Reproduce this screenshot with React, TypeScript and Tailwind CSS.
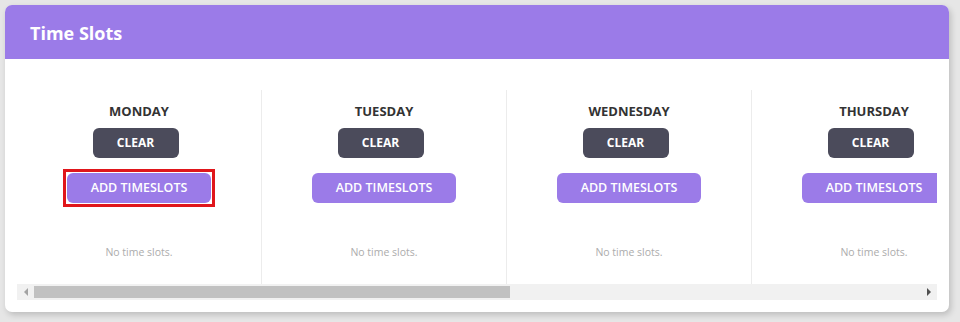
import React from "react";

const days = ["Monday", "Tuesday", "Wednesday", "Thursday", "Friday", "Saturday", "Sunday"];

function DayColumn({ day, highlighted }: { day: string; highlighted?: boolean }) {
  return (
    <div className="w-[245px] shrink-0 border-r border-[#ececec] flex flex-col items-center pt-3 pb-6">
      <h3 className="text-[13px] leading-[18px] font-bold text-[#333] uppercase">{day}</h3>
      <button className="mt-2 mr-[7px] h-[30px] w-[86px] rounded-[6px] bg-[#4b4b5b] text-white text-[12px] font-bold uppercase">
        Clear
      </button>
      <div
        className={
          highlighted
            ? "mt-[11px] border-[3px] border-[#e0161b] p-[1px]"
            : "mt-[15px]"
        }
      >
        <button className="h-[30px] w-[144px] rounded-[6px] bg-[#9b7be8] text-white text-[12.5px] font-semibold uppercase">
          Add Timeslots
        </button>
      </div>
      <p
        className={
          (highlighted ? "mt-[37px]" : "mt-[41px]") +
          " text-[10.5px] leading-4 text-[#acacac]"
        }
      >
        No time slots.
      </p>
    </div>
  );
}

// drawn scrollbar, the headless browser hides the native one
function HScrollbar() {
  return (
    <div className="h-4 bg-[#f1f1f1] flex items-center">
      <div className="w-[17px] h-full flex items-center justify-center">
        <div className="w-0 h-0 border-y-[4px] border-y-transparent border-r-[4px] border-r-[#a3a3a3]" />
      </div>
      <div className="flex-1 h-full py-[2px]">
        <div className="w-[476px] h-full bg-[#c1c1c1]" />
      </div>
      <div className="w-[17px] h-full flex items-center justify-center">
        <div className="w-0 h-0 border-y-[4px] border-y-transparent border-l-[4px] border-l-[#505050]" />
      </div>
    </div>
  );
}

export default function App() {
  return (
    <div
      className="min-h-[322px] bg-[#e6e6e6] pt-[5px] pl-[5px]"
      style={{ fontFamily: "'Open Sans', 'Liberation Sans', sans-serif" }}
    >
      <div className="w-[944px] rounded-[7px] bg-white shadow-[2px_3px_6px_rgba(0,0,0,0.18)] overflow-hidden">
        {/* Header */}
        <div className="h-[54px] bg-[#9b7be8] flex items-center px-[25px] pt-[2px]">
          <h2 className="text-[18px] font-bold text-white">Time Slots</h2>
        </div>

        {/* Body */}
        <div className="px-3 pt-[31px] pb-3">
          <div className="overflow-hidden">
            <div className="flex w-max">
              {days.map((d, i) => (
                <DayColumn key={d} day={d} highlighted={i === 0} />
              ))}
            </div>
          </div>
          <HScrollbar />
        </div>
      </div>
    </div>
  );
}
